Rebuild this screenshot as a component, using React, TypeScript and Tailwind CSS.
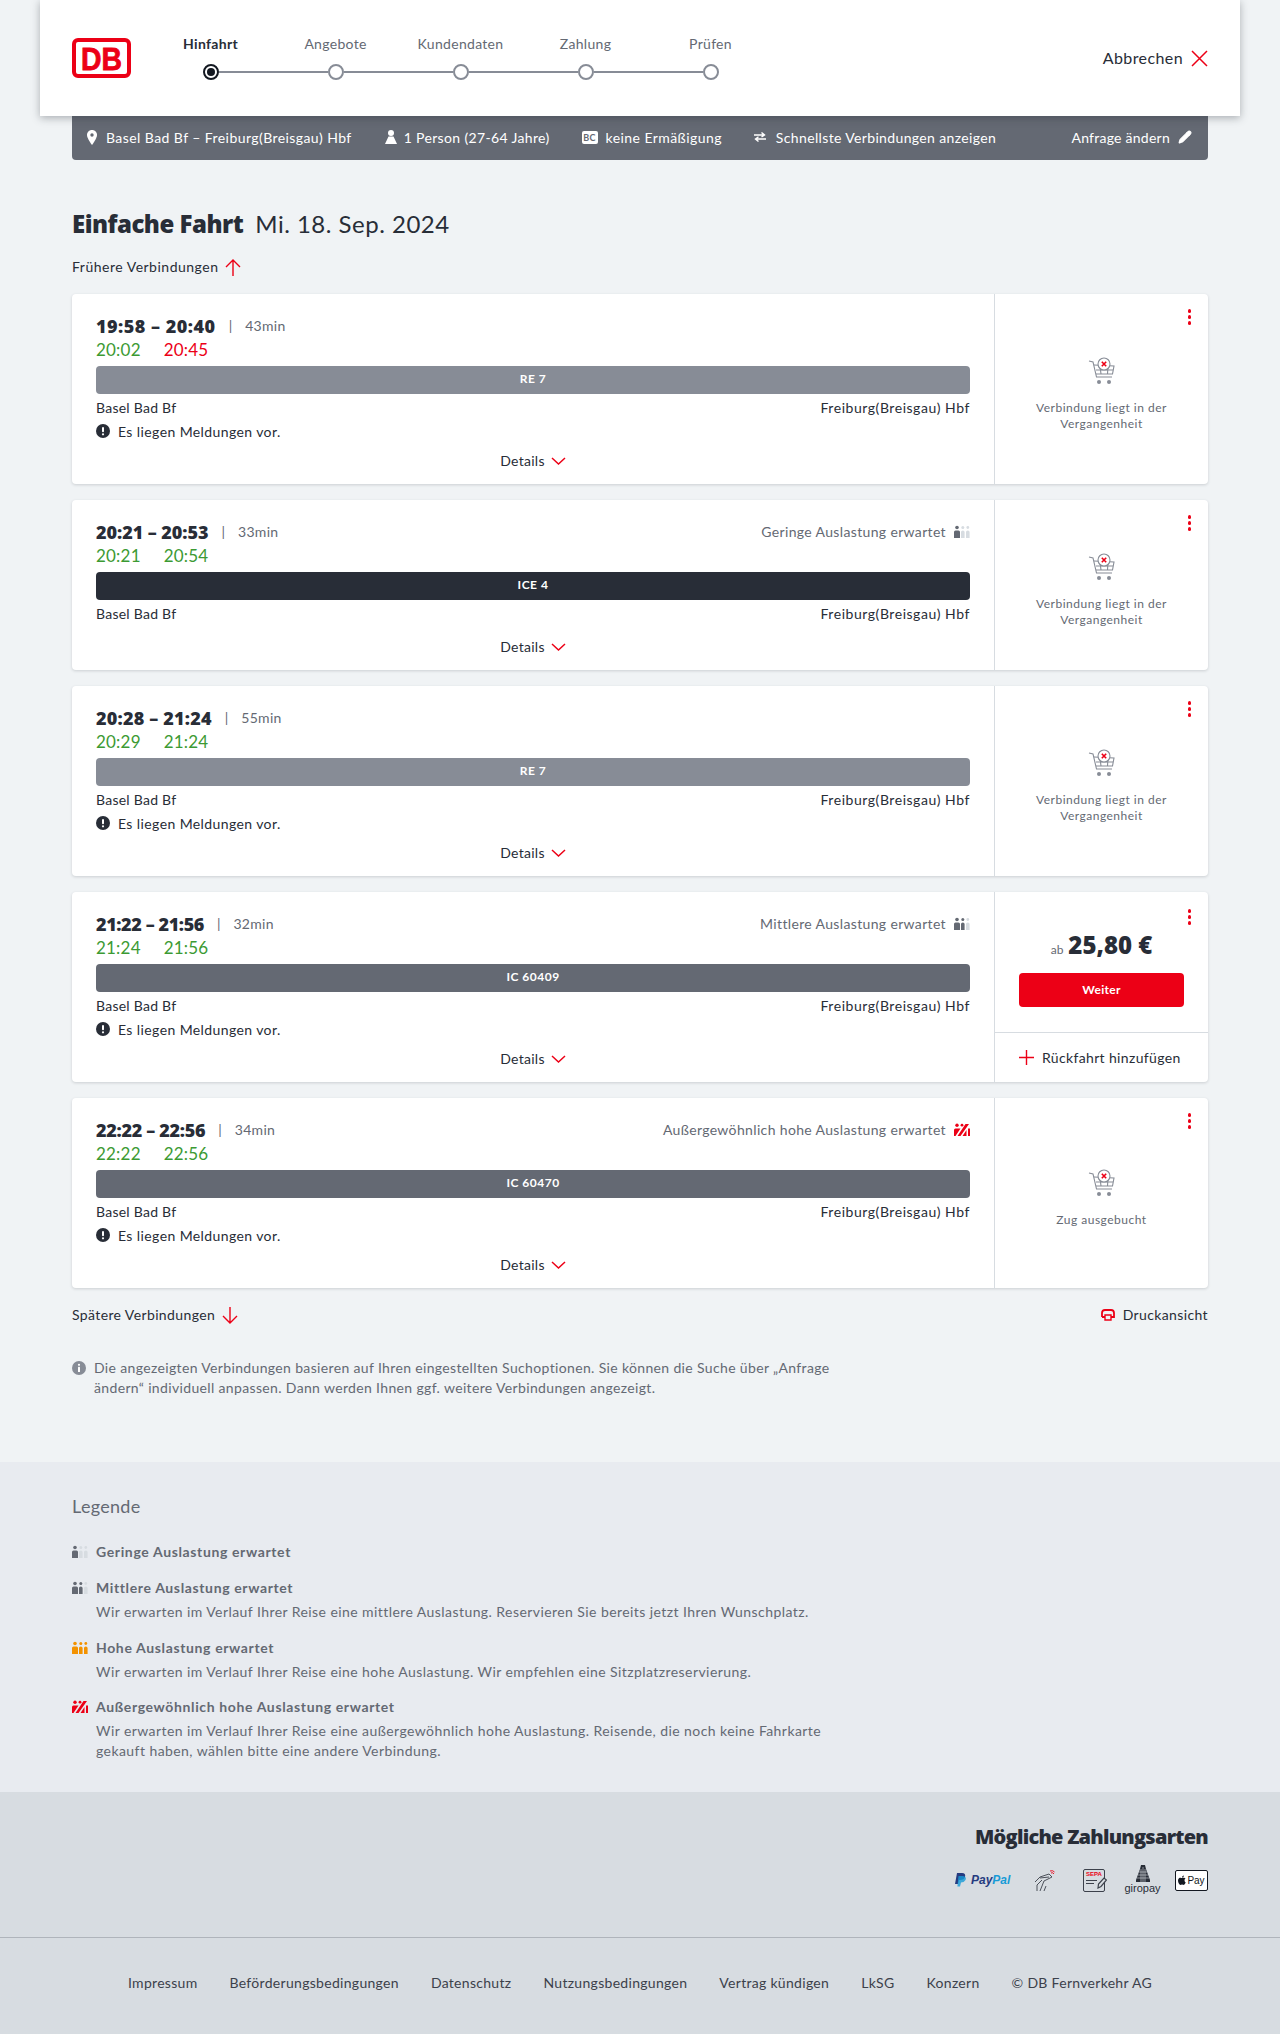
import { Pencil } from "lucide-react";

type Conn = {
  time: string;
  timeClass: string;
  dur: string;
  real: [string, string];
  late?: boolean;
  train: string;
  barClass: string;
  msg?: boolean;
  load?: { level: number; text: string };
  side: "past" | "full" | "price";
};

const conns: Conn[] = [
  { time: "19:58 – 20:40", timeClass: "tracking-[0.5px]", dur: "43min", real: ["20:02", "20:45"], late: true, train: "RE 7", barClass: "bg-[#878c96]", msg: true, side: "past" },
  { time: "20:21 – 20:53", timeClass: "tracking-[-0.05px]", dur: "33min", real: ["20:21", "20:54"], train: "ICE 4", barClass: "bg-[#282d37]", load: { level: 1, text: "Geringe Auslastung erwartet" }, side: "past" },
  { time: "20:28 – 21:24", timeClass: "tracking-[0.2px]", dur: "55min", real: ["20:29", "21:24"], train: "RE 7", barClass: "bg-[#878c96]", msg: true, side: "past" },
  { time: "21:22 – 21:56", timeClass: "tracking-[-0.4px]", dur: "32min", real: ["21:24", "21:56"], train: "IC 60409", barClass: "bg-[#646973]", msg: true, load: { level: 2, text: "Mittlere Auslastung erwartet" }, side: "price" },
  { time: "22:22 – 22:56", timeClass: "tracking-[-0.3px]", dur: "34min", real: ["22:22", "22:56"], train: "IC 60470", barClass: "bg-[#646973]", msg: true, load: { level: 4, text: "Außergewöhnlich hohe Auslastung erwartet" }, side: "full" },
];

const Occupancy = ({ level }: { level: number }) => {
  const light = "#d7dce1";
  if (level === 4) {
    return (
      <svg width="16" height="14" viewBox="0 0 16 14" className="shrink-0">
        <circle cx="3" cy="2.2" r="1.7" fill="#ec0016" />
        <circle cx="8" cy="2.2" r="1.4" fill="#ec0016" />
        <path d="M0 7 Q0 5.5 1.5 5.5 H6.5 L1.5 13 H0 Z M3.5 13 L11.5 1 H15 L6.5 13 Z M8.5 13 L12.5 7 V13 Z M14 5.5 H16 V13 H14 Z" fill="#ec0016" />
      </svg>
    );
  }
  const fills = [0, 1, 2].map((i) => {
    if (level === 3) return "#f39200";
    return i < level ? "#646973" : light;
  });
  return (
    <svg width="16" height="14" viewBox="0 0 16 14" className="shrink-0">
      <circle cx="3" cy="2.5" r="1.8" fill={fills[0]} />
      <path d="M0 7 Q0 5.5 1.5 5.5 H4.5 Q6 5.5 6 7 V13 H0 Z" fill={fills[0]} />
      <circle cx="8.8" cy="2.5" r="1.5" fill={fills[1]} />
      <path d="M7 7 Q7 5.5 8.8 5.5 Q10.6 5.5 10.6 7 V13 H7 Z" fill={fills[1]} />
      <circle cx="13.8" cy="2.5" r="1.4" fill={fills[2]} />
      <path d="M12 7 Q12 5.5 13.8 5.5 Q15.6 5.5 15.6 7 V13 H12 Z" fill={fills[2]} />
    </svg>
  );
};

const Cart = () => (
  <svg width="28" height="28" viewBox="0 0 28 28" fill="none" stroke="#878c96" strokeWidth="1.1" className="mt-px">
    <path d="M1 4 L5 5 L8.5 20 H24" />
    <path d="M6 8 L26 9 L24.5 17 H8" />
    <path d="M8 13 H25 M12 9 L13 17 M20 9 L19.5 17" />
    <circle cx="16" cy="7" r="6" fill="#fff" />
    <path d="M13.8 4.8 L18.2 9.2 M18.2 4.8 L13.8 9.2" stroke="#ec0016" strokeWidth="1.6" />
    <circle cx="11" cy="25" r="2" fill="#878c96" stroke="none" />
    <circle cx="21" cy="25" r="2" fill="#878c96" stroke="none" />
  </svg>
);

const Chevron = () => (
  <svg width="15" height="8" viewBox="0 0 15 8" fill="none" stroke="#ec0016" strokeWidth="1.5">
    <path d="M1 1 L7.5 7 L14 1" />
  </svg>
);

const ArrowV = ({ down }: { down?: boolean }) => (
  <svg width="16" height="17" viewBox="0 0 16 17" fill="none" stroke="#ec0016" strokeWidth="1.4" className={down ? "rotate-180" : ""}>
    <path d="M8 17 V1 M1 8 L8 1 L15 8" />
  </svg>
);

const Dots = ({ top }: { top: string }) => (
  <div className={`absolute right-[17px] flex flex-col gap-[2.5px] ${top}`}>
    <span className="w-[3.5px] h-[3.5px] rounded-full bg-[#ec0016]" />
    <span className="w-[3.5px] h-[3.5px] rounded-full bg-[#ec0016]" />
    <span className="w-[3.5px] h-[3.5px] rounded-full bg-[#ec0016]" />
  </div>
);

const Alert = ({ color, mark }: { color: string; mark: "!" | "i" }) => (
  <svg width="14" height="14" viewBox="0 0 14 14" className="shrink-0">
    <circle cx="7" cy="7" r="7" fill={color} />
    {mark === "!" ? (
      <>
        <rect x="6" y="3" width="2" height="5.2" rx="1" fill="#fff" />
        <circle cx="7" cy="10.3" r="1.1" fill="#fff" />
      </>
    ) : (
      <>
        <circle cx="7" cy="3.8" r="1.1" fill="#fff" />
        <rect x="6" y="5.8" width="2" height="5.2" rx="0.6" fill="#fff" />
      </>
    )}
  </svg>
);

const Card = ({ c }: { c: Conn }) => (
  <div className="flex bg-white rounded-[4px] shadow-[0_1px_3px_rgba(40,45,55,0.18)]">
    <div className="w-[923px] pl-6 pr-6 pt-[22px] pb-[13px] border-r border-[#d7dce1]">
      <div className="flex items-center justify-between h-5">
        <div className="flex items-center">
          <span className={`font-['Open_Sans',sans-serif] text-[18px] font-extrabold text-[#282d37] ${c.timeClass}`}>{c.time}</span>
          <span className="mx-[13px] pb-[2px] text-[#646973] text-[14px]">|</span>
          <span className="pb-[2px] text-[14px] text-[#646973] tracking-[0.3px]">{c.dur}</span>
        </div>
        {c.load && (
          <div className="flex items-center gap-[8px] text-[14px] text-[#646973] tracking-[0.35px]">
            <span className="pb-[2px]">{c.load.text}</span>
            <Occupancy level={c.load.level} />
          </div>
        )}
      </div>
      <div className="flex gap-[23px] mt-[2px] h-6 items-center text-[17px] text-[#3c9a33] tracking-[0.2px]">
        <span>{c.real[0]}</span>
        <span className={c.late ? "text-[#ec0016]" : ""}>{c.real[1]}</span>
      </div>
      <div className={`mt-1 h-7 pb-[2px] rounded-[4px] flex items-center justify-center text-white text-[12px] font-bold tracking-[0.5px] ${c.barClass}`}>
        {c.train}
      </div>
      <div className="flex justify-between mt-1 h-5 pb-[2px] items-center text-[14px] text-[#282d37] tracking-[0.55px]">
        <span className="tracking-[0.25px]">Basel Bad Bf</span>
        <span>Freiburg(Breisgau) Hbf</span>
      </div>
      {c.msg && (
        <div className="flex items-center gap-2 mt-1 h-5 pb-[2px] text-[14px] text-[#282d37] tracking-[0.4px]">
          <Alert color="#282d37" mark="!" />
          Es liegen Meldungen vor.
        </div>
      )}
      <div className={`flex items-center justify-center gap-[6px] h-5 text-[14px] text-[#282d37] tracking-[0.3px] ${c.msg ? "mt-[9px]" : "mt-[13px]"}`}>
        <span className="pb-[2px]">Details</span>
        <Chevron />
      </div>
    </div>
    <div className="relative flex-1 flex flex-col">
      <Dots top={c.side === "price" ? "top-[17px]" : "top-[15px]"} />
      {c.side === "price" ? (
        <>
          <div className="h-[141px] flex flex-col items-center pt-[35px] border-b border-[#d7dce1]">
            <div className="flex items-baseline gap-[5px] h-9">
              <span className="text-[12px] text-[#646973]">ab</span>
              <span className="font-['Open_Sans',sans-serif] text-[24px] font-extrabold text-[#282d37] tracking-[0px]">25,80 €</span>
            </div>
            <button className="mt-[10px] w-[165px] h-[34px] rounded-[4px] bg-[#ec0016] text-white text-[12px] font-bold tracking-[0.3px]">Weiter</button>
          </div>
          <div className="flex-1 flex items-center pl-6 gap-2 text-[14px] text-[#282d37] tracking-[0.35px]">
            <svg width="15" height="15" viewBox="0 0 15 15" fill="none" stroke="#ec0016" strokeWidth="1.4" className="shrink-0">
              <path d="M7.5 0 V15 M0 7.5 H15" />
            </svg>
            Rückfahrt hinzufügen
          </div>
        </>
      ) : (
        <div className="flex-1 flex flex-col items-center justify-center pt-[10px] text-[12px] leading-4 text-[#646973] tracking-[0.5px] text-center">
          <Cart />
          {c.side === "past" ? (
            <p className="mt-[15px] w-[160px]">Verbindung liegt in der Vergangenheit</p>
          ) : (
            <p className="mt-[15px]">Zug ausgebucht</p>
          )}
        </div>
      )}
    </div>
  </div>
);

const steps = ["Hinfahrt", "Angebote", "Kundendaten", "Zahlung", "Prüfen"];

const Header = () => (
  <header className="relative z-10 mx-10 h-[116px] bg-white shadow-[0_2px_8px_rgba(40,45,55,0.35)] flex items-center pl-8 pr-8">
    <svg width="59" height="40" viewBox="0 0 59 40" className="shrink-0">
      <rect x="2" y="2" width="55" height="36" rx="4" fill="#fff" stroke="#ec0016" strokeWidth="4" />
      <text x="29.5" y="31.5" textAnchor="middle" fontFamily="Liberation Sans" fontWeight="700" fontSize="32" fill="#ec0016" stroke="#ec0016" strokeWidth="0.8" textLength="41" lengthAdjust="spacingAndGlyphs">DB</text>
    </svg>
    <div className="ml-[17px] w-[625px] self-start pt-[33px]">
      <div className="grid grid-cols-5 text-center text-[14px] h-5 items-center tracking-[0.3px]">
        {steps.map((s, i) => (
          <span key={s} className={i === 0 ? "font-bold text-[#282d37]" : "text-[#646973]"}>{s}</span>
        ))}
      </div>
      <div className="flex items-center px-[54.5px] mt-[11px]">
        <span className="w-4 h-4 rounded-full border-2 border-[#131821] flex items-center justify-center shrink-0">
          <span className="w-2 h-2 rounded-full bg-[#131821]" />
        </span>
        {steps.slice(1).map((s) => (
          <div key={s} className="flex items-center flex-1">
            <span className="flex-1 h-[2px] bg-[#878c96]" />
            <span className="w-4 h-4 rounded-full border-2 border-[#878c96] shrink-0" />
          </div>
        ))}
      </div>
    </div>
    <div className="ml-auto flex items-center gap-2 text-[16px] text-[#282d37] tracking-[0.4px]">
      Abbrechen
      <svg width="17" height="17" viewBox="0 0 17 17" fill="none" stroke="#ec0016" strokeWidth="1.5" className="shrink-0">
        <path d="M1 1 L16 16 M16 1 L1 16" />
      </svg>
    </div>
  </header>
);

const SubBar = () => (
  <div className="mx-[72px] h-11 pb-[2px] rounded-b-[4px] bg-[#646973] flex items-center pl-[15px] pr-4 text-white text-[14px] tracking-[0.43px]">
    <svg width="10" height="15" viewBox="0 0 10 15" className="shrink-0">
      <path d="M5 0 C2 0 0 2.2 0 5 C0 8.5 5 15 5 15 C5 15 10 8.5 10 5 C10 2.2 8 0 5 0 Z" fill="#fff" />
      <circle cx="5" cy="5" r="1.7" fill="#646973" />
    </svg>
    <span className="ml-[9px]">Basel Bad Bf – Freiburg(Breisgau) Hbf</span>
    <svg width="12" height="14" viewBox="0 0 12 14" className="ml-[33px] shrink-0">
      <circle cx="6" cy="3" r="3" fill="#fff" />
      <path d="M3.5 6.5 H8.5 L12 14 H0 Z" fill="#fff" />
    </svg>
    <span className="ml-[7px] tracking-[0.35px]">1 Person (27-64 Jahre)</span>
    <span className="ml-8 w-4 h-[13px] rounded-[2px] bg-white text-[#646973] text-[9px] font-bold leading-[13px] text-center shrink-0">BC</span>
    <span className="ml-2">keine Ermäßigung</span>
    <svg width="12" height="10" viewBox="0 0 12 10" fill="none" stroke="#fff" strokeWidth="1.4" className="ml-8 shrink-0">
      <path d="M0 3 H10 M7.5 0.5 L10.5 3 L7.5 5 M12 7 H2 M4.5 4.8 L1.5 7 L4.5 9.5" />
    </svg>
    <span className="ml-[10px] tracking-[0.36px]">Schnellste Verbindungen anzeigen</span>
    <span className="ml-auto tracking-[0.25px]">Anfrage ändern</span>
    <Pencil size={14} fill="#fff" className="ml-2 shrink-0" />
  </div>
);

const Legend = () => (
  <section className="bg-[#e8ebf0] h-[330px] px-[72px] pt-[32px] text-[14px] text-[#646973]">
    <h3 className="text-[18px] h-6 flex items-center tracking-[0.3px]">Legende</h3>
    <LegendItem level={1} title="Geringe Auslastung erwartet" mt="mt-[24px]" />
    <LegendItem level={2} title="Mittlere Auslastung erwartet" mt="mt-4">
      Wir erwarten im Verlauf Ihrer Reise eine mittlere Auslastung. Reservieren Sie bereits jetzt Ihren Wunschplatz.
    </LegendItem>
    <LegendItem level={3} title="Hohe Auslastung erwartet" mt="mt-4">
      Wir erwarten im Verlauf Ihrer Reise eine hohe Auslastung. Wir empfehlen eine Sitzplatzreservierung.
    </LegendItem>
    <LegendItem level={4} title="Außergewöhnlich hohe Auslastung erwartet" mt="mt-[15px]">
      Wir erwarten im Verlauf Ihrer Reise eine außergewöhnlich hohe Auslastung. Reisende, die noch keine Fahrkarte gekauft haben, wählen bitte eine andere Verbindung.
    </LegendItem>
  </section>
);

const LegendItem = ({ level, title, mt, children }: { level: number; title: string; mt: string; children?: React.ReactNode }) => (
  <div className={`flex gap-2 ${mt}`}>
    <div className="h-5 flex items-center"><Occupancy level={level} /></div>
    <div className="w-[760px]">
      <p className="h-5 leading-5 font-bold tracking-[0.63px]">{title}</p>
      {children && <p className="mt-1 leading-5 tracking-[0.43px]">{children}</p>}
    </div>
  </div>
);

const Payments = () => (
  <div className="flex items-center justify-end h-[30px] mt-[14px]">
    <div className="flex items-center gap-[5px] w-[56px]">
      <svg width="11" height="14" viewBox="0 0 11 14" className="shrink-0">
        <path d="M2 0 H7 Q11 0 10 4 Q9 7 5 7 H4 L3 11 H0 Z" fill="#253b80" />
        <path d="M3.5 3 H8 Q12 3.5 10.5 7 Q9 9.5 6 9.5 L5 13.5 H2.4 Z" fill="#179bd7" opacity="0.8" />
      </svg>
      <span className="font-['Liberation_Sans',sans-serif] italic font-bold text-[12px] text-[#253b80]">Pay<span className="text-[#179bd7]">Pal</span></span>
    </div>
    <svg width="21" height="23" viewBox="0 0 21 23" fill="none" stroke="#3c414b" strokeWidth="0.9" className="ml-[23px] shrink-0">
      <path d="M1 13 L6 8 L15 5 L18 8 L10 12 L8 17 L6 22 M3 22 L3 16 L8 11 M12 17 L10 22 M6 9 L15 8" />
      <path d="M16 2 Q19 1 20.5 3 M17 4 Q19 3 20 5" stroke="#ec0016" />
    </svg>
    <div className="relative w-[22px] h-[23px] ml-[28px] mr-[2px] border border-[#3c414b] rounded-[2px] text-left shrink-0">
      <span className="block font-['Liberation_Sans',sans-serif] font-bold text-[6px] leading-[9px] pl-[2px] text-[#ec0016]">SEPA</span>
      <span className="block w-[11px] h-px bg-[#3c414b] ml-[2px] mt-px" />
      <span className="block w-[8px] h-px bg-[#3c414b] ml-[2px] mt-[2px]" />
      <svg width="10" height="12" viewBox="0 0 10 12" className="absolute -right-[3px] bottom-[2px]" fill="#d7dce1" stroke="#3c414b" strokeWidth="1.2">
        <path d="M1 11 L1.5 7 L7 1 L9.5 3 L4 9.5 Z" />
      </svg>
    </div>
    <div className="flex flex-col items-center w-[33px] ml-[19px] shrink-0">
      <svg width="16" height="17" viewBox="0 0 16 17">
        <path d="M6 0 H10 L11 4 L15 15 V17 H1 V15 L5 4 Z" fill="#282d37" />
        <path d="M4 7 H12 M3 10 H13 M2 13 H14 M6 4 V17 M8 2 V17 M10 4 V17" stroke="#d7dce1" strokeWidth="0.6" />
      </svg>
      <span className="font-['Liberation_Sans',sans-serif] text-[11px] leading-[13px] text-[#282d37]">giropay</span>
    </div>
    <div className="w-[33px] h-[21px] ml-4 rounded-[2px] border border-[#131821] bg-white flex items-center justify-center gap-px shrink-0">
      <svg width="8" height="10" viewBox="0 0 8 10">
        <path d="M6.5 5.3 C6.5 4.2 7.4 3.7 7.5 3.6 C7 2.8 6.1 2.7 5.8 2.7 C5.1 2.6 4.4 3.1 4 3.1 C3.6 3.1 3.1 2.7 2.4 2.7 C1.6 2.7 0.8 3.2 0.4 4 C-0.4 5.4 0.2 7.5 1 8.7 C1.4 9.3 1.9 9.9 2.5 9.9 C3.1 9.9 3.3 9.5 4 9.5 C4.7 9.5 4.9 9.9 5.5 9.9 C6.2 9.9 6.6 9.3 7 8.7 C7.4 8.1 7.6 7.5 7.7 7.4 C7.6 7.4 6.5 7 6.5 5.3 Z M5.4 2 C5.7 1.6 5.9 1.1 5.9 0.5 C5.4 0.5 4.8 0.9 4.5 1.2 C4.2 1.6 3.9 2.1 4 2.6 C4.5 2.7 5.1 2.4 5.4 2 Z" fill="#131821" />
      </svg>
      <span className="font-['Liberation_Sans',sans-serif] text-[10px] text-[#131821]">Pay</span>
    </div>
  </div>
);

const links = ["Impressum", "Beförderungsbedingungen", "Datenschutz", "Nutzungsbedingungen", "Vertrag kündigen", "LkSG", "Konzern", "© DB Fernverkehr AG"];

const Footer = () => (
  <footer className="bg-[#d7dce1]">
    <div className="h-[146px] border-b border-[#afb4bb] px-[72px] pt-[31px] text-right">
      <h4 className="font-['Open_Sans',sans-serif] text-[20px] h-7 leading-7 font-extrabold text-[#282d37] tracking-[-0.75px]">Mögliche Zahlungsarten</h4>
      <Payments />
    </div>
    <div className="h-[96px] pb-2 flex items-center justify-center gap-8 text-[14px] text-[#3c414b] tracking-[0.3px]">
      {links.map((l) => (
        <span key={l}>{l}</span>
      ))}
    </div>
  </footer>
);

const App = () => {
  return (
    <div className="w-[1280px] h-[2034px] overflow-hidden bg-[#f0f3f5] font-['Lato',sans-serif]">
      <Header />
      <SubBar />
      <main className="px-[72px] pb-16">
        <h1 className="mt-12 h-8 flex items-center gap-3 text-[24px] text-[#282d37] tracking-[0.5px]">
          <span className="font-['Open_Sans',sans-serif] font-extrabold tracking-[-0.5px]">Einfache Fahrt</span>
          <span>Mi. 18. Sep. 2024</span>
        </h1>
        <div className="mt-[17px] h-5 flex items-center gap-[7px] text-[14px] text-[#282d37] tracking-[0.5px]">
          <span className="pb-[2px]">Frühere Verbindungen</span>
          <ArrowV />
        </div>
        <div className="mt-[17px] flex flex-col gap-4">
          {conns.map((c) => (
            <Card key={c.time} c={c} />
          ))}
        </div>
        <div className="mt-[17px] h-5 flex items-center justify-between text-[14px] text-[#282d37] tracking-[0.38px]">
          <div className="flex items-center gap-[7px]">
            <span className="pb-[2px]">Spätere Verbindungen</span>
            <ArrowV down />
          </div>
          <div className="flex items-center gap-2">
            <svg width="14" height="14" viewBox="0 0 14 14" fill="none" stroke="#ec0016" strokeWidth="1.8">
              <path d="M1 9 V5 Q1 2 4 2 H10 Q13 2 13 5 V9 H10 M4 9 H1" />
              <path d="M4 7 H10 V12 H4 Z" strokeWidth="1.4" />
            </svg>
            <span className="pb-[2px]">Druckansicht</span>
          </div>
        </div>
        <div className="mt-[33px] flex gap-2 text-[14px] leading-5 text-[#646973] tracking-[0.35px]">
          <div className="h-5 flex items-center"><Alert color="#878c96" mark="i" /></div>
          <p className="w-[750px]">
            Die angezeigten Verbindungen basieren auf Ihren eingestellten Suchoptionen. Sie können die Suche über „Anfrage ändern“ individuell anpassen. Dann werden Ihnen ggf. weitere Verbindungen angezeigt.
          </p>
        </div>
      </main>
      <Legend />
      <Footer />
    </div>
  );
};

export default App;
